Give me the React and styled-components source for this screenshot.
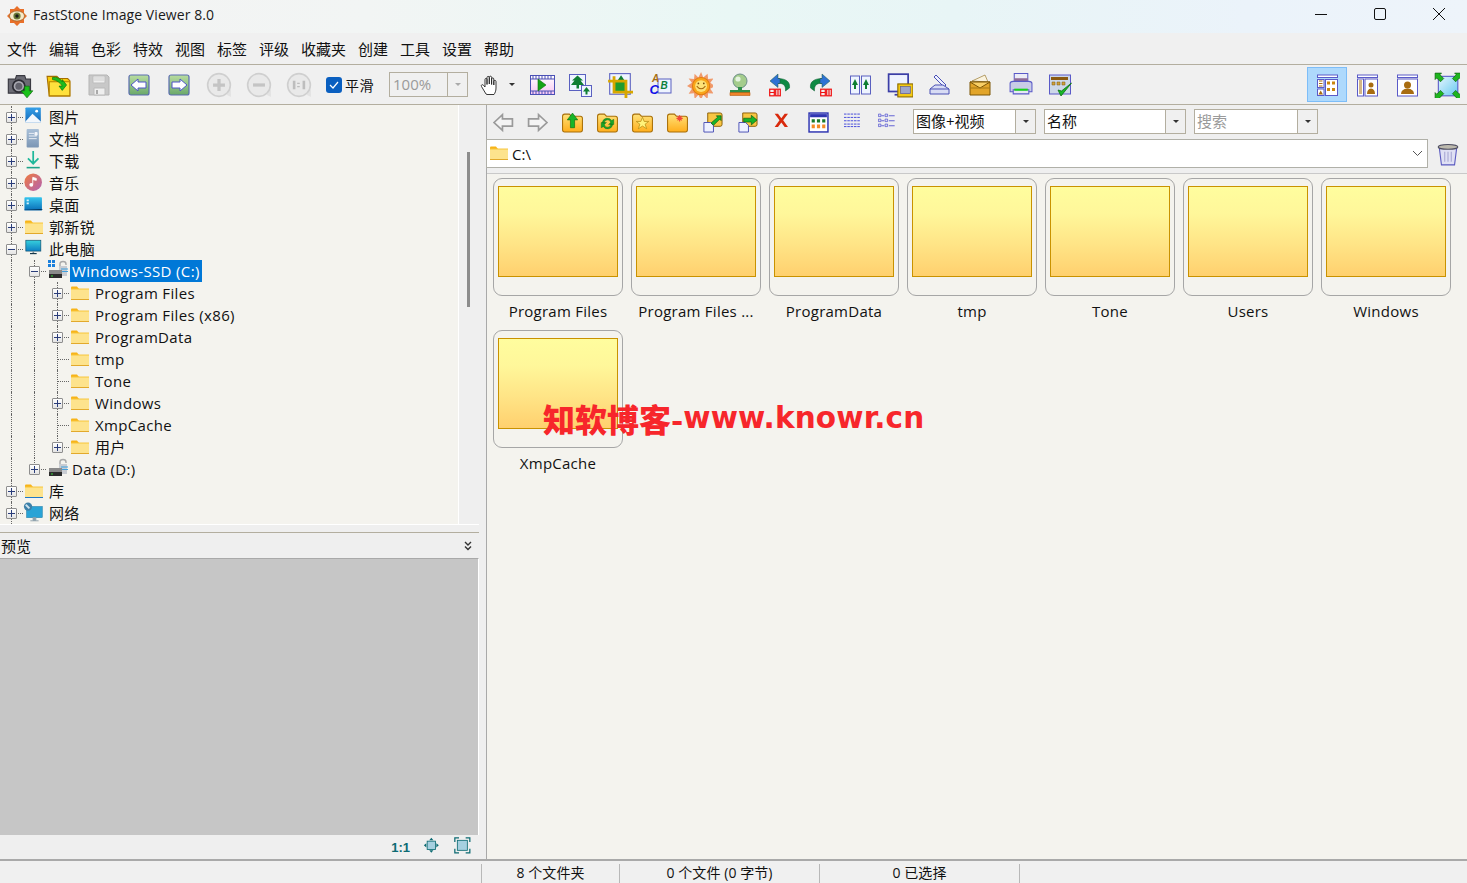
import React from "react";
import styled, { createGlobalStyle } from "styled-components";

const Global = createGlobalStyle`
  html, body { margin: 0; padding: 0; height: 100%; overflow: hidden; }
  body { background: #f0f0f0; font-family: "Open Sans", "Noto Sans CJK SC", sans-serif; color: #111; }
  #root { height: 100%; }
  * { box-sizing: border-box; }
`;

const Shell = styled.div`
  width: 1467px; height: 883px; display: flex; flex-direction: column; position: relative; overflow: hidden;
`;
const TitleBar = styled.div`
  height: 33px; flex: none; display: flex; align-items: center;
  background: linear-gradient(90deg, #f3f3f3 0%, #f2f5f4 25%, #e9f7f5 50%, #e8f5f6 65%, #ebf3fa 85%, #eef4fa 100%);
`;
const AppLogo = styled.svg`width: 20px; height: 20px; margin-left: 7px; flex: none; position: relative; top: -1px;`;
const TitleText = styled.span`font-size: 14px; letter-spacing: .08px; margin-left: 6px; color: #1a1a1a; position: relative; top: -2px;`;
const WindowButtons = styled.div`margin-left: auto; margin-right: -1px; display: flex; align-self: flex-start;`;
const WindowButton = styled.div`width: 59px; height: 28px; display: flex; align-items: center; justify-content: center;`;
const MenuBar = styled.div`
  height: 32px; flex: none; display: flex; align-items: center; padding-left: 7px; gap: 12px;
  background: #f0f0f0; border-bottom: 1px solid #b3ae9f;
`;
const MenuItem = styled.span`font-size: 15px; line-height: 32px; width: ${p => p.$w || 30}px; white-space: nowrap;`;
const MainToolbar = styled.div`
  height: 40px; flex: none; display: flex; align-items: center; background: #f0f0f0; border-bottom: 1px solid #b3ae9f;
`;
const ToolButton = styled.div`
  width: ${p => p.$w || 40}px; height: 35px; flex: none; display: flex; align-items: center; justify-content: center;
  ${p => p.$active ? "background: #aed9fc; border: 1px solid #7dbdf8;" : ""}
`;
const CheckBox = styled.div`
  width: 16px; height: 16px; margin-left: 7px; flex: none; background: #0a5fc0; border-radius: 3px;
  display: flex; align-items: center; justify-content: center;
`;
const CheckLabel = styled.span`font-size: 14px; letter-spacing: .4px; margin-left: 3px; width: 29px; white-space: nowrap;`;
const ZoomCombo = styled.div`
  width: 79px; height: 25px; margin-left: 15px; flex: none; display: flex; border: 1px solid #b3ae9f; background: #f0f0f0;
`;
const ZoomValue = styled.span`flex: 1; font-size: 15px; line-height: 23px; padding-left: 3px; color: #9a9a9a;`;
const ComboArrow = styled.div`
  width: ${p => p.$w || 20}px; flex: none; border-left: 1px solid #b3ae9f; display: flex; align-items: center; justify-content: center; background: #f0f0f0;
  &::after { content: ""; border: 3px solid transparent; border-top: 3px solid ${p => p.$dim ? "#aaa" : "#333"}; border-bottom: 0; width: 0; height: 0; }
`;
const HandGroup = styled.div`width: 52px; margin-left: 5px; height: 30px; display: flex; align-items: center; padding-left: 6px; gap: 6px; flex: none;`;
const SmallCaret = styled.div`border: 3px solid transparent; border-top: 3px solid #333; border-bottom: 0; width: 0; height: 0;`;
const RightGroup = styled.div`margin-left: auto; display: flex;`;
const Body = styled.div`flex: 1; display: flex; min-height: 0;`;
const LeftColumn = styled.div`width: 487px; flex: none; display: flex; flex-direction: column; background: #efefef; border-right: 1px solid #a9a9a9;`;
const TreeArea = styled.div`height: 420px; width: 479px; flex: none; display: flex; border-bottom: 1px solid #fff;`;
const TreePane = styled.div`width: 459px; flex: none; background: #f4f3ee; border-right: 1px solid #fff; padding-top: 1px; overflow: hidden;`;
const TreeScroll = styled.div`flex: 1; padding: 47px 0 0 8px;`;
const ScrollThumb = styled.div`width: 3px; height: 155px; background: #8c8c8c;`;
const Row = styled.div`display: flex; height: 22px; align-items: center; font-size: 15px; letter-spacing: .35px; white-space: nowrap;`;
const Guide = styled.div`
  width: 23px; height: 22px; flex: none; position: relative;
  ${p => p.$on ? `&::before { content: ""; position: absolute; left: 11px; top: 0; bottom: 0; border-left: 1px dotted #666; }` : ""}
`;
const Expander = styled.div`
  width: 23px; height: 22px; flex: none; position: relative;
  ${p => p.$up ? `&::before { content: ""; position: absolute; left: 11px; top: 0; height: ${p.$down ? 22 : 11}px; border-left: 1px dotted #666; }` : ""}
  &::after { content: ""; position: absolute; left: 11px; top: 11px; width: 12px; border-top: 1px dotted #666; }
`;
const ExpBox = styled.div`
  position: absolute; left: 6px; top: 6px; width: 11px; height: 11px; z-index: 1; background: linear-gradient(#fff, #e4e4e4); border: 1px solid #8e8e8e;
  border-radius: 1px;
  &::before { content: ""; position: absolute; left: 1px; right: 1px; top: 4px; height: 1px; background: #2a3d7a; }
  ${p => p.$plus ? `&::after { content: ""; position: absolute; top: 1px; bottom: 1px; left: 4px; width: 1px; background: #2a3d7a; }` : ""}
`;
const RowIcon = styled.div`width: 26px; height: 22px; flex: none; display: flex; align-items: center; padding-left: ${p => p.$pl ?? 1}px;`;
const RowLabel = styled.span`
  margin-left: -2px; padding: 0 2px; line-height: 22px; height: 22px;
  ${p => p.$sel ? "background: #0078d7; color: #fff;" : ""}
`;
const PreviewHeader = styled.div`
  width: 479px; margin-top: 7px; height: 26px; flex: none; border-top: 1px solid #b3ae9f; display: flex; align-items: center; justify-content: space-between;
  padding: 0 7px 0 1px; font-size: 15px;
`;
const PreviewImage = styled.div`width: 479px; height: 277px; flex: none; background: #c6c6c6; border-right: 1px solid #fff; border-top: 1px solid #a9a9a9;`;
const PreviewTools = styled.div`width: 479px; flex: 1; display: flex; justify-content: flex-end; align-items: center; padding-right: 5px; gap: 11px;`;
const RatioText = styled.span`font: bold 13px "Liberation Sans", sans-serif; color: #0d6b73; margin-right: 2px;`;
const RightColumn = styled.div`flex: 1; display: flex; flex-direction: column; min-width: 0; background: #efefef;`;
const SubToolbar = styled.div`height: 34px; flex: none; display: flex; align-items: center; padding-left: 0;`;
const SubButton = styled.div`width: ${p => p.$w || 35}px; height: 26px; flex: none; display: flex; align-items: center; justify-content: center;`;
const Combo = styled.div`
  width: ${p => p.$w}px; height: 25px; margin-left: ${p => p.$ml || 0}px; flex: none; display: flex; background: #fff; border: 1px solid #b3ae9f;
  position: relative; top: -1px;
`;
const ComboText = styled.span`flex: 1; font-size: 15px; line-height: 22px; padding-left: 2px; color: ${p => p.$dim ? "#9a9a9a" : "#111"}; white-space: nowrap;`;
const AddressRow = styled.div`height: 29px; flex: none; display: flex; align-items: center; margin-left: -1px;`;
const AddressBox = styled.div`
  width: 944px; height: 29px; background: #fff; border: 1px solid #b0b0a8; display: flex; align-items: center; padding: 0 4px 0 3px; font-size: 15px; gap: 4px;
`;
const AddressCaret = styled.svg`margin-left: auto; width: 11px; height: 7px;`;
const TrashSlot = styled.div`width: 39px; display: flex; justify-content: center;`;
const Gallery = styled.div`
  flex: 1; margin-top: 5px; background: #f4f3ee; border-top: 1px solid #c9c9c9; padding: 4px 0 0 6px;
  display: grid; grid-template-columns: repeat(7, 130px); column-gap: 8px; grid-auto-rows: 152px; align-content: start;
`;
const Thumb = styled.div`display: flex; flex-direction: column; align-items: center;`;
const ThumbCard = styled.div`
  width: 130px; height: 118px; flex: none; border: 1px solid #a6a6a6; border-radius: 9px; padding: 7px 4px 0;
`;
const FolderFace = styled.div`
  width: 120px; height: 91px; border: 1px solid #c99200; background: linear-gradient(#fffd9e 0%, #fff79a 30%, #ffe486 65%, #ffd06e 100%);
`;
const ThumbLabel = styled.div`font-size: 15px; letter-spacing: .25px; line-height: 20px; margin-top: 5px; white-space: nowrap;`;
const Watermark = styled.div`
  position: absolute; left: 543px; top: 400px; height: 36px; display: flex; align-items: center; color: #f7262b; font-weight: 900; white-space: nowrap;
`;
const WatermarkCn = styled.span`font: 900 32px/36px "Noto Sans CJK SC", sans-serif;`;
const WatermarkEn = styled.span`font: bold 29.5px/36px "DejaVu Sans", sans-serif; letter-spacing: .15px;`;
const StatusBar = styled.div`
  height: 24px; flex: none; display: flex; background: #f0f0f0; border-top: 2px solid #a9a9a9; font-size: 14px; letter-spacing: .08px; padding-left: 481px;
`;
const StatusCell = styled.div`
  width: ${p => p.$w}px; border-left: 1px solid #b8b8b8; text-align: center; margin-top: 3px; height: 19px; line-height: 17px; white-space: nowrap;
`;

const Svg = ({ s = 24, vb = 24, children, h }) => <svg width={s} height={h || s} viewBox={`0 0 ${vb} ${h ? vb * h / s : vb}`}>{children}</svg>;

const Folder = ({ s = 18, lib }) => (
  <svg width={s} height={s * 0.78} viewBox="0 0 18 14">
    <path d="M0 1.5Q0 .5 1 .5H6L8 3H0Z" fill="#f7b418" />
    <path d="M0 3H18V13.2H0Z" fill="#fde38d" />
    <path d="M0 2.5H18V3.5H0Z" fill="#f8c63c" />
    <path d="M0 13H18V14H0Z" fill={lib ? "#1e78c8" : "#e2a92c"} />
  </svg>
);

const Icons = {
  camera: <Svg s={28}><path d="M2 7H8L9 4H16L17 7H21V19H2Z" fill="#6b6b74" stroke="#3a3a42" /><circle cx="11" cy="13" r="5.2" fill="#a8a8b0" stroke="#2c2c34" strokeWidth="1.5" /><circle cx="11" cy="13" r="3" fill="#62626c" /><path d="M16 13H20V17H23L18 23L13 17H16Z" fill="#19c119" stroke="#0b700b" strokeWidth=".6" /></Svg>,
  open: <Svg s={26}><path d="M1 4H10L12 6H20L22 8V22H3Z" fill="#f9cb0d" stroke="#a66e00" /><path d="M3 9H22V22H3Z" fill="#ffe13d" stroke="#b48000" /><path d="M6 5Q12 4 15 9V7L19 12L15 17L12 13H15Q12 8 6 7Z" fill="#1dbb1d" stroke="#0a700a" strokeWidth=".6" /></Svg>,
  save: <Svg s={24}><path d="M2 2H20L22 4V22H2Z" fill="#c8c8c8" stroke="#b5b5b5" /><path d="M6 3H18V10H6Z" fill="#eeeeee" stroke="#bdbdbd" /><path d="M7 5H17M7 7H17" stroke="#cfcfcf" /><path d="M7 15H18V22H7Z" fill="#efefef" stroke="#bbb" /><path d="M9 17H11V21H9Z" fill="#aaa" /></Svg>,
  nav: (d) => <Svg s={24}><defs><linearGradient id={`g${d}`} x1="0" y1="0" x2="0" y2="1"><stop offset="0" stopColor="#b9dda0" /><stop offset="1" stopColor="#6aa86a" /></linearGradient></defs><rect x="2" y="2" width="20" height="20" rx="2" fill={`url(#g${d})`} stroke="#5a6cb0" strokeWidth="1.2" /><path d={d === "l" ? "M4 12L11 6V9H19V15H11V18Z" : "M20 12L13 6V9H5V15H13V18Z"} fill="#fff" stroke="#4f55c8" strokeWidth="1" /></Svg>,
  circ: (t) => <Svg s={26}><path d="M19 21L23 23V16Z" fill="#e3e3e3" /><circle cx="12" cy="12" r="10.5" fill="#e9e9e9" stroke="#cfcfcf" strokeWidth="1.5" />{t === "+" && <path d="M12 6.5V17.5M6.5 12H17.5" stroke="#c4c4c4" strokeWidth="3" />}{t === "-" && <path d="M6.5 12H17.5" stroke="#c4c4c4" strokeWidth="3" />}{t === "1" && <path d="M7.5 8V16M16.5 8V16M11.5 10V11M11.5 13V14" stroke="#bdbdbd" strokeWidth="2.4" />}</Svg>,
  hand: <Svg s={24}><path d="M7 21L2.5 13.5C1.7 12 3.4 11 4.5 12.3L6 14V6.5C6 5 8 5 8 6.5V11.5V4.5C8 3 10.3 3 10.3 4.5V11V4.3C10.3 2.8 12.6 2.8 12.6 4.3V11.5V6C12.6 4.6 14.8 4.6 14.8 6V12V8.5C14.8 7 17 7 17 8.5V15C17 18 16 20 15 21.5H8Z" fill="#fff" stroke="#222" strokeWidth=".9" /></Svg>,
  film: <svg width="25" height="22" viewBox="0 0 25 22"><defs><linearGradient id="fl" x1="0" y1="0" x2="0" y2="1"><stop offset="0" stopColor="#fff" /><stop offset="1" stopColor="#f9c6f2" /></linearGradient></defs><rect x=".5" y="1.5" width="24" height="19" fill="url(#fl)" stroke="#4a50b5" /><path d="M1 5H24M1 17H24" stroke="#4a50b5" /><path d="M3 2V5M6 2V5M9 2V5M12 2V5M15 2V5M18 2V5M21 2V5M3 17V20M6 17V20M9 17V20M12 17V20M15 17V20M18 17V20M21 17V20" stroke="#4a50b5" /><path d="M8 5V17L16 11Z" fill="#18a318" stroke="#0d6d0d" strokeWidth=".6" /></svg>,
  tree: <Svg s={24}><rect x="1.5" y="1.5" width="16" height="16" fill="#eef4ff" stroke="#5a60c0" /><path d="M9.5 2.5L15 7.5H12.5L16 12H11V15.5H8.5V12H3L6.5 7.5H4Z" fill="#0f7e33" /><rect x="13.5" y="12.5" width="10" height="11" fill="#eef4ff" stroke="#5a60c0" /><path d="M18.5 14L22 18.5H19.5V21.5H17.5V18.5H15Z" fill="#0f7e33" /></Svg>,
  crop: <Svg s={26}><rect x="2.5" y="1.5" width="19" height="19" fill="#eef4ff" stroke="#5a60c0" /><path d="M6 9H18V19H6Z" fill="#1f9c2f" /><path d="M13 3L17 9H9Z" fill="#0f7e33" /><path d="M6.5 4V18.5H24M1 8.5H17.5V24" fill="none" stroke="#d8a700" strokeWidth="2.6" /></Svg>,
  abc: <Svg s={24}><rect x="10" y="6" width="13" height="14" fill="#eef4ff" stroke="#5a60c0" /><text x="4" y="9" fontFamily="Liberation Sans" fontWeight="bold" fontStyle="italic" fontSize="10" fill="#a56d10">A</text><text x="12.5" y="16" fontFamily="Liberation Sans" fontWeight="bold" fontStyle="italic" fontSize="10" fill="#0b7f3b">B</text><text x="1.5" y="21" fontFamily="Liberation Sans" fontWeight="bold" fontStyle="italic" fontSize="13" fill="#1010e8">C</text></Svg>,
  sun: <Svg s={26}><path d="M13 0L15 5L19 1.5L19.5 6.5L24.5 6L21.5 10L26 13L21.5 15.5L24.5 20L19.5 19.5L19 25L15 21L13 26L10.5 21L7 25L6.5 19.5L1.5 20L4.5 15.5L0 13L4.5 10L1.5 6L6.5 6.5L7 1.5L10.5 5Z" fill="#f09a6c" /><circle cx="13" cy="13" r="8" fill="#f9a51a" stroke="#e27d10" /><circle cx="13" cy="13" r="5.5" fill="#fde276" /><path d="M9 13Q13 18 17 13" fill="none" stroke="#a8660c" /><circle cx="10.5" cy="10.5" r=".8" fill="#764b0c" /><circle cx="15.5" cy="10.5" r=".8" fill="#764b0c" /></Svg>,
  stamp: <Svg s={24}><circle cx="12" cy="8" r="7" fill="#a4cc8c" stroke="#6d8e88" /><circle cx="10" cy="6" r="2.6" fill="#e5f3df" /><path d="M10 14H14V17H22V20H2V17H10Z" fill="#2f8f4a" /><path d="M2 19.5H22V22.5H2Z" fill="#f0842a" stroke="#b55e12" strokeWidth=".6" /></Svg>,
  rot: (l) => <Svg s={24}><g transform={l ? "" : "translate(24 0) scale(-1 1)"}><path d="M10 5.5C18 5.5 22.5 9 21.5 15L17.5 18C18 12 15 10 10 10.5Z" fill="#0f8a44" stroke="#0c5d30" strokeWidth=".5" /><path d="M10 1L2 8L10 14.5V10.5H12V5.5H10Z" fill="#2f72d4" stroke="#1b5a44" strokeWidth=".5" /></g><g transform={l ? "translate(1 15.5)" : "translate(12 15.5)"} fill="none" stroke="#f01010" strokeWidth="1.2"><rect x=".7" y=".7" width="4.6" height="6.6" /><rect x="6.7" y=".7" width="4.6" height="6.6" /><path d="M.7 4H5.3M9 1V7" /></g></Svg>,
  split: <Svg s={24}><rect x="2.5" y="3" width="9" height="18" fill="#eef4ff" stroke="#5a60c0" /><rect x="13.5" y="3" width="9" height="18" fill="#eef4ff" stroke="#5a60c0" /><path d="M7 6L10 12H8V16H6V12H4ZM18 6L21 12H19V16H17V12H15Z" fill="#0f7e33" /></Svg>,
  monitor: <Svg s={26}><rect x="1.5" y="2" width="18" height="16" fill="#eef2ff" stroke="#3b3ea6" strokeWidth="1.6" /><path d="M7 21H16" stroke="#3b3ea6" strokeWidth="1.6" /><rect x="10" y="11" width="14" height="12" fill="#f4c913" stroke="#8a6a00" /><rect x="12.5" y="13.5" width="9" height="6.5" fill="#9da5cc" stroke="#55559a" strokeWidth=".6" /></Svg>,
  scanner: <Svg s={24}><path d="M8 2L18 12L16 14L6 4Z" fill="#eef1ff" stroke="#4a50b5" /><path d="M7 12H15L21 16V21H2V16Z" fill="#d8dcf4" stroke="#4a50b5" /><path d="M2 16H21" stroke="#4a50b5" /></Svg>,
  envelope: <Svg s={24}><path d="M4 8L17 2L20 9Z" fill="#faf3df" stroke="#9a7a30" strokeWidth=".7" /><path d="M2 9H22V22H2Z" fill="#e2a52a" stroke="#7d5606" /><path d="M2 9H22L12 15Z" fill="#f8cf66" stroke="#7d5606" /><path d="M2 15H22" stroke="#a87a14" /></Svg>,
  printer: <Svg s={25}><path d="M6 1.5H19V10H6Z" fill="#ececf6" stroke="#5a5ac8" /><path d="M6 6H19V11H6Z" fill="#8f6a96" /><path d="M2 11Q2 9 5 9H20Q23 9 23 11V19H2Z" fill="#c9cce6" stroke="#5a5ac8" /><path d="M5 17H20V21H5Z" fill="#e6e7f4" stroke="#5a5ac8" /><path d="M6 16H19V18H6Z" fill="#19d219" /></Svg>,
  check: <Svg s={24}><rect x="1.5" y="2" width="21" height="19" fill="#cdd8e8" stroke="#5a5ac8" /><path d="M3 4H20V7H3Z" fill="#8a5a10" /><path d="M4 9H7V12H4ZM9 9H12V12H9ZM14 9H17V12H14Z" fill="#cfa13a" stroke="#7a5a10" strokeWidth=".5" /><path d="M10 17L13 23L23.5 10L13.5 18Z" fill="#18b828" stroke="#0a700f" strokeWidth=".8" /></Svg>,
  layout: (k) => <Svg s={24}>
    <rect x="2.5" y="2" width="20" height="2.5" fill="#fff" stroke="#5a5ac8" />
    {k === 1 && <><rect x="2.5" y="6.5" width="6.5" height="8" fill="#fff" stroke="#5a5ac8" /><rect x="2.5" y="16" width="6.5" height="6.5" fill="#fff" stroke="#5a5ac8" /><rect x="10.5" y="6.5" width="12" height="16" fill="#fff" stroke="#5a5ac8" /><path d="M4 8H7.5M4 10.5H7.5M4 13H7.5" stroke="#a86c10" /><path d="M12 8.5H15V11.5H12ZM17 8.5H20V11.5H17ZM12 15H15V18H12ZM17 15H20V18H17Z" fill="#c9860e" /><path d="M5.7 17.5L8 21.5H3.5Z" fill="#a86c10" /></>}
    {k === 2 && <><rect x="2.5" y="6" width="6" height="17" fill="#fff" stroke="#5a5ac8" /><rect x="10" y="6" width="12.5" height="17" fill="#fff" stroke="#5a5ac8" /><path d="M4 8H7M4 10H7M4 12H7M4 14H7M4 16H7M4 18H7M4 20H7" stroke="#a86c10" /><circle cx="16" cy="12" r="2.5" fill="#a86c10" /><path d="M12 21Q12 16 16 15.5Q20 16 20 21Z" fill="#a86c10" /></>}
    {k === 3 && <><rect x="2.5" y="6" width="20" height="17" fill="#fff" stroke="#5a5ac8" /><circle cx="12.5" cy="12" r="3.5" fill="#a86c10" /><path d="M6 21Q6 16 12.5 15.5Q19 16 19 21Z" fill="#a86c10" /></>}
  </Svg>,
  full: <Svg s={26}><defs><linearGradient id="fu" x1="0" y1="0" x2="1" y2="1"><stop offset="0" stopColor="#e6f6ff" /><stop offset="1" stopColor="#66c9ef" /></linearGradient></defs><rect x="4" y="4" width="18" height="18" fill="url(#fu)" stroke="#5a5ac8" /><path d="M1 1H7L5.5 2.5L9 6L6 9L2.5 5.5L1 7ZM25 1H19L20.5 2.5L17 6L20 9L23.5 5.5L25 7ZM1 25H7L5.5 23.5L9 20L6 17L2.5 20.5L1 19ZM25 25H19L20.5 23.5L17 20L20 17L23.5 20.5L25 19Z" fill="#1eb51e" stroke="#0b5a10" strokeWidth=".6" /></Svg>,
  arrowOut: (r) => <Svg s={21} vb={20}><path d={r ? "M19 10L11 2.5V6.5H1.5V13.5H11V17.5Z" : "M1 10L9 2.5V6.5H18.5V13.5H9V17.5Z"} fill="#f4f4f4" stroke="#9a9a9a" strokeWidth="1.6" /></Svg>,
  yFolder: (inner, id) => <Svg s={23} vb={22}><defs><linearGradient id={id} x1="0" y1="0" x2="0" y2="1"><stop offset="0" stopColor="#ffe27a" /><stop offset="1" stopColor="#ffae1c" /></linearGradient></defs><path d="M1.5 5Q1.5 3 3.5 3H8L10 5H18.5Q20.5 5 20.5 7V18Q20.5 20 18.5 20H3.5Q1.5 20 1.5 18Z" fill={`url(#${id})`} stroke="#a86f08" />{inner}</Svg>,
  docMove: (arrow) => <Svg s={21} vb={22}><path d="M6 1H19Q21 1 21 3V13Q21 15 19 15H6Z" fill="#f9c643" stroke="#8a5e08" /><path d="M2 11H9L12 14V21H2Z" fill="#eef1ff" stroke="#4a50b5" />{arrow}</Svg>,
  xMark: <Svg s={20}><path d="M2 2H6L10 7.5L14 2H18L12.2 10L18 18H14L10 12.5L6 18H2L7.8 10Z" fill="#d92a0d" /></Svg>,
  thumbs: <Svg s={21} vb={20}><rect x="1" y="1" width="18" height="18" fill="#fff" stroke="#2f35b2" strokeWidth="1.4" /><path d="M2 2H18V5H2Z" fill="#2f35b2" /><path d="M3.5 7H6.5V10H3.5ZM8.5 7H11.5V10H8.5ZM13.5 7H16.5V10H13.5Z" fill="#1a7a2a" /><path d="M3.5 12H6.5V15.5H3.5ZM8.5 12H11.5V15.5H8.5ZM13.5 12H16.5V15.5H13.5Z" fill="#f58a24" /></Svg>,
  list: <Svg s={20}><path d="M0 2.5H20M0 6.5H20M0 10.5H20M0 14.5H20M0 17.5H20" stroke="#2a30d8" strokeDasharray="3 1" /></Svg>,
  detail: <Svg s={20}><path d="M.5 2.5H3.5V5.5H.5ZM8.5 2.5H11.5V5.5H8.5ZM.5 8.5H3.5V11.5H.5ZM8.5 8.5H11.5V11.5H8.5ZM.5 14.5H3.5V17.5H.5ZM8.5 14.5H11.5V17.5H8.5Z" fill="#dde" stroke="#4a4ad0" strokeWidth=".8" /><path d="M4 4.5H7.5M13 4.5H20M4 10.5H7.5M13 10.5H20M4 16.5H7.5M13 16.5H20" stroke="#4a4ad0" /></Svg>,
  trash: <Svg s={24} vb={22}><path d="M3 5H19L17 21H5Z" fill="#dfe0f4" stroke="#5a5ac0" /><ellipse cx="11" cy="4.5" rx="9" ry="2.2" fill="#bcb9ad" stroke="#4d4d60" /><path d="M8 9V18M11 9V18M14 9V18" stroke="#a8a8d4" /></Svg>,
  picture: <Svg s={20}><defs><linearGradient id="pc" x1="0" y1="0" x2="0" y2="1"><stop offset="0" stopColor="#36a0e8" /><stop offset="1" stopColor="#1268b8" /></linearGradient></defs><rect x=".5" y=".5" width="18.5" height="18.5" rx="1" fill="url(#pc)" /><circle cx="14" cy="5" r="1.7" fill="#fff" /><path d="M.5 17.5L9 8L19 17.5V19H.5Z" fill="#f2f7fc" /></Svg>,
  doc: <Svg s={21}><defs><linearGradient id="dc" x1="0" y1="0" x2="0" y2="1"><stop offset="0" stopColor="#a9c0d8" /><stop offset="1" stopColor="#7b96b4" /></linearGradient></defs><rect x="3" y="0" width="14" height="21" rx="1" fill="url(#dc)" /><path d="M5.5 5H11.5M5.5 8H14.5M5.5 11H14.5M12.5 4V7H15V4Z" stroke="#f3f6fa" strokeWidth="1" fill="#f3f6fa" /></Svg>,
  down: <Svg s={21}><path d="M10.5 0V14M4.5 8.5L10.5 14.5L16.5 8.5" fill="none" stroke="#20b89a" strokeWidth="2" /><path d="M3 19H18" stroke="#1fa48a" strokeWidth="1.8" /></Svg>,
  music: <Svg s={21}><defs><linearGradient id="mu" x1="0" y1="0" x2="1" y2="1"><stop offset="0" stopColor="#ef7b3e" /><stop offset="1" stopColor="#b262b4" /></linearGradient></defs><circle cx="10.5" cy="10.5" r="10" fill="url(#mu)" /><path d="M10 5V13M10 5L14 6.2V8.4L10 7.4" fill="#fff" stroke="#fff" /><circle cx="8.3" cy="13.5" r="2.2" fill="#fff" /></Svg>,
  desktop: <Svg s={21}><defs><linearGradient id="dk" x1="0" y1="0" x2="0" y2="1"><stop offset="0" stopColor="#36c6ee" /><stop offset="1" stopColor="#0a6fb8" /></linearGradient></defs><rect x=".5" y="2.5" width="20" height="15" rx="1" fill="url(#dk)" /><path d="M3 5H5.5V7H3ZM3 8.5H5.5V10.5H3Z" fill="#d8f2fb" /><path d="M.5 17H20.5V16" stroke="#075a99" /></Svg>,
  pc: <Svg s={20}><defs><linearGradient id="pcg" x1="0" y1="0" x2="0" y2="1"><stop offset="0" stopColor="#37d1dd" /><stop offset="1" stopColor="#0d7fc4" /></linearGradient></defs><rect x="1" y="1.5" width="18" height="13" fill="url(#pcg)" stroke="#0d4d6a" strokeWidth=".8" /><path d="M9 15H11V17H9Z" fill="#7a8c96" /><path d="M6 17.5H14" stroke="#15364a" strokeWidth="1.4" /></Svg>,
  drive: (win) => <svg width="24" height="22" viewBox="0 0 24 22">{win && <path d="M1 0H4V3H1ZM5 0H8V3H5ZM1 4H4V7H1ZM5 4H8V7H5Z" fill="#1b80dc" />}<path d="M13 6V4Q13 1.5 16 1.5Q19 1.5 19 4V5" fill="none" stroke="#a8a8a8" strokeWidth="1.4" /><path d="M12 6H20V16H12Z" fill="#c8ccd2" /><path d="M14 9H21M14 11.5H21" stroke="#3f9fdd" strokeWidth="1.1" /><path d="M2 10H15V17H2Z" fill="#8a8a8a" /><path d="M2 14H15V18H2Z" fill="#2c2c2c" /><path d="M4 15.4H6V16.6H4Z" fill="#37d437" /></svg>,
  net: <Svg s={22}><rect x="4" y="5" width="17" height="12" fill="#29a3d6" stroke="#147aa8" strokeWidth=".6" /><path d="M11 17H14V20H11ZM8 20.5H17" fill="#8ba0ac" stroke="#8ba0ac" /><circle cx="5.5" cy="5" r="4.5" fill="#3d80a8" /><path d="M3 3L7 7" stroke="#cfe3ef" strokeWidth="2" /></Svg>,
  fit: <Svg s={20}><rect x="5" y="5" width="10" height="10" fill="#a6d0e0" stroke="#0d6b73" /><path d="M10 1L7.5 4H12.5ZM10 19L7.5 16H12.5ZM1 10L4 7.5V12.5ZM19 10L16 7.5V12.5Z" fill="#0d6b73" /></Svg>,
  fill: <Svg s={20}><rect x="4" y="4" width="12" height="12" fill="#a6d0e0" stroke="#0d6b73" /><path d="M1 6V1H6M14 1H19V6M1 14V19H6M14 19H19V14" fill="none" stroke="#0d6b73" strokeWidth="1.5" /></Svg>,
};

const menu = [["文件"], ["编辑"], ["色彩"], ["特效"], ["视图"], ["标签"], ["评级"], ["收藏夹", 45], ["创建"], ["工具"], ["设置"], ["帮助"]];

const treeRows = [
  { g: [], up: true, down: true, exp: "plus", icon: Icons.picture, pl: 2, label: "图片" },
  { g: [], up: true, down: true, exp: "plus", icon: Icons.doc, pl: 1, label: "文档" },
  { g: [], up: true, down: true, exp: "plus", icon: Icons.down, pl: 1, label: "下载" },
  { g: [], up: true, down: true, exp: "plus", icon: Icons.music, pl: 1, label: "音乐" },
  { g: [], up: true, down: true, exp: "plus", icon: Icons.desktop, pl: 1, label: "桌面" },
  { g: [], up: true, down: true, exp: "plus", icon: <Folder />, pl: 2, label: "郭新锐" },
  { g: [], up: true, down: true, exp: "minus", icon: Icons.pc, pl: 2, label: "此电脑" },
  { g: [1], up: true, down: true, exp: "minus", icon: Icons.drive(true), pl: 1, label: "Windows-SSD (C:)", sel: true },
  { g: [1, 1], up: true, down: true, exp: "plus", icon: <Folder />, pl: 2, label: "Program Files" },
  { g: [1, 1], up: true, down: true, exp: "plus", icon: <Folder />, pl: 2, label: "Program Files (x86)" },
  { g: [1, 1], up: true, down: true, exp: "plus", icon: <Folder />, pl: 2, label: "ProgramData" },
  { g: [1, 1], up: true, down: true, icon: <Folder />, pl: 2, label: "tmp" },
  { g: [1, 1], up: true, down: true, icon: <Folder />, pl: 2, label: "Tone" },
  { g: [1, 1], up: true, down: true, exp: "plus", icon: <Folder />, pl: 2, label: "Windows" },
  { g: [1, 1], up: true, down: true, icon: <Folder />, pl: 2, label: "XmpCache" },
  { g: [1, 1], up: true, exp: "plus", icon: <Folder />, pl: 2, label: "用户" },
  { g: [1], up: true, exp: "plus", icon: Icons.drive(false), pl: 1, label: "Data (D:)" },
  { g: [], up: true, down: true, exp: "plus", icon: <Folder lib />, pl: 2, label: "库" },
  { g: [], up: true, down: true, exp: "plus", icon: Icons.net, pl: 0, label: "网络" },
];

const thumbs = ["Program Files", "Program Files ...", "ProgramData", "tmp", "Tone", "Users", "Windows", "XmpCache"];

export default function App() {
  return (
    <Shell>
      <Global />
      <TitleBar>
        <AppLogo viewBox="0 0 20 20">
          <path d="M10 0L13 3L17 3L17 7L20 10L17 13L17 17L13 17L10 20L7 17L3 17L3 13L0 10L3 7L3 3L7 3Z" fill="#e8702a" />
          <ellipse cx="10" cy="10" rx="7.5" ry="5" fill="#f6e9c9" stroke="#8a5a20" strokeWidth=".6" />
          <circle cx="10" cy="10" r="3.6" fill="#6a7a38" />
          <circle cx="10" cy="10" r="1.7" fill="#1a1a1a" />
        </AppLogo>
        <TitleText>FastStone Image Viewer 8.0</TitleText>
        <WindowButtons>
          <WindowButton><svg width="12" height="12" viewBox="0 0 12 12"><path d="M0 6.5H12" stroke="#111" /></svg></WindowButton>
          <WindowButton><svg width="12" height="12" viewBox="0 0 12 12"><rect x=".5" y=".5" width="11" height="11" rx="1.5" fill="none" stroke="#111" /></svg></WindowButton>
          <WindowButton><svg width="12" height="12" viewBox="0 0 12 12"><path d="M0 0L12 12M12 0L0 12" stroke="#111" /></svg></WindowButton>
        </WindowButtons>
      </TitleBar>
      <MenuBar>
        {menu.map(([t, w]) => <MenuItem key={t} $w={w}>{t}</MenuItem>)}
      </MenuBar>
      <MainToolbar>
        <ToolButton $w={39}>{Icons.camera}</ToolButton>
        <ToolButton>{Icons.open}</ToolButton>
        <ToolButton>{Icons.save}</ToolButton>
        <ToolButton>{Icons.nav("l")}</ToolButton>
        <ToolButton>{Icons.nav("r")}</ToolButton>
        <ToolButton>{Icons.circ("+")}</ToolButton>
        <ToolButton>{Icons.circ("-")}</ToolButton>
        <ToolButton>{Icons.circ("1")}</ToolButton>
        <CheckBox><svg width="10" height="8" viewBox="0 0 10 8"><path d="M1 4L4 7L9 1" fill="none" stroke="#fff" strokeWidth="1.2" /></svg></CheckBox>
        <CheckLabel>平滑</CheckLabel>
        <ZoomCombo><ZoomValue>100%</ZoomValue><ComboArrow $dim /></ZoomCombo>
        <HandGroup>{Icons.hand}<SmallCaret /></HandGroup>
        <ToolButton $w={35}>{Icons.film}</ToolButton>
        <ToolButton>{Icons.tree}</ToolButton>
        <ToolButton>{Icons.crop}</ToolButton>
        <ToolButton>{Icons.abc}</ToolButton>
        <ToolButton>{Icons.sun}</ToolButton>
        <ToolButton>{Icons.stamp}</ToolButton>
        <ToolButton>{Icons.rot(true)}</ToolButton>
        <ToolButton>{Icons.rot(false)}</ToolButton>
        <ToolButton>{Icons.split}</ToolButton>
        <ToolButton>{Icons.monitor}</ToolButton>
        <ToolButton>{Icons.scanner}</ToolButton>
        <ToolButton>{Icons.envelope}</ToolButton>
        <ToolButton>{Icons.printer}</ToolButton>
        <ToolButton>{Icons.check}</ToolButton>
        <RightGroup>
          <ToolButton $active>{Icons.layout(1)}</ToolButton>
          <ToolButton>{Icons.layout(2)}</ToolButton>
          <ToolButton>{Icons.layout(3)}</ToolButton>
          <ToolButton>{Icons.full}</ToolButton>
        </RightGroup>
      </MainToolbar>
      <Body>
        <LeftColumn>
          <TreeArea>
            <TreePane>
              {treeRows.map(r => (
                <Row key={r.label}>
                  {r.g.map((on, i) => <Guide key={i} $on={on} />)}
                  <Expander $up={r.up} $down={r.down}>{r.exp && <ExpBox $plus={r.exp === "plus"} />}</Expander>
                  <RowIcon $pl={r.pl}>{r.icon}</RowIcon>
                  <RowLabel $sel={r.sel}>{r.label}</RowLabel>
                </Row>
              ))}
            </TreePane>
            <TreeScroll><ScrollThumb /></TreeScroll>
          </TreeArea>
          <PreviewHeader>
            预览
            <svg width="8" height="10" viewBox="0 0 8 10"><path d="M1 1L4 4L7 1M1 5.5L4 8.5L7 5.5" fill="none" stroke="#333" strokeWidth="1.4" /></svg>
          </PreviewHeader>
          <PreviewImage />
          <PreviewTools>
            <RatioText>1:1</RatioText>
            {Icons.fit}
            {Icons.fill}
          </PreviewTools>
        </LeftColumn>
        <RightColumn>
          <SubToolbar>
            <SubButton $w={33}>{Icons.arrowOut(false)}</SubButton>
            <SubButton>{Icons.arrowOut(true)}</SubButton>
            <SubButton>{Icons.yFolder(<path d="M11 2L16 8.5H13V16H9V8.5H6Z" fill="#18b528" stroke="#0b6b14" strokeWidth=".6" />, "y1")}</SubButton>
            <SubButton>{Icons.yFolder(<path d="M6 11A5 5 0 0 1 15 9L17 8V13H12L14 11A3 3 0 0 0 8 12ZM16 13A5 5 0 0 1 7 15L5 16V11H10L8 13A3 3 0 0 0 14 12Z" fill="#18a528" stroke="#0b6b14" strokeWidth=".4" />, "y2")}</SubButton>
            <SubButton>{Icons.yFolder(<path d="M11 6L12.6 10H17L13.5 12.6L15 17L11 14.4L7 17L8.5 12.6L5 10H9.4Z" fill="#fff27a" stroke="#b68a10" strokeWidth=".7" />, "y3")}</SubButton>
            <SubButton>{Icons.yFolder(<path d="M13 4V10M10 7H16M11 5L15 9M15 5L11 9" stroke="#f0463a" strokeWidth="1.1" />, "y4")}</SubButton>
            <SubButton>{Icons.docMove(<path d="M15 4H20V9L18.5 7.5L12 14L9.5 11.5L16.5 5.5Z" fill="#18b528" stroke="#0b5b14" strokeWidth=".7" />)}</SubButton>
            <SubButton>{Icons.docMove(<path d="M7 6.5H15V3.5L21 8.5L15 13.5V10.5H7Z" fill="#18b528" stroke="#0b5b14" strokeWidth=".7" />)}</SubButton>
            <SubButton>{Icons.xMark}</SubButton>
            <SubButton $w={37}>{Icons.thumbs}</SubButton>
            <SubButton $w={33}>{Icons.list}</SubButton>
            <SubButton>{Icons.detail}</SubButton>
            <Combo $w={123} $ml={8}><ComboText>图像+视频</ComboText><ComboArrow /></Combo>
            <Combo $w={142} $ml={8}><ComboText>名称</ComboText><ComboArrow /></Combo>
            <Combo $w={124} $ml={8}><ComboText $dim>搜索</ComboText><ComboArrow /></Combo>
          </SubToolbar>
          <AddressRow>
            <AddressBox>
              <Folder />
              C:\
              <AddressCaret viewBox="0 0 11 7"><path d="M1 1L5.5 5.5L10 1" fill="none" stroke="#555" /></AddressCaret>
            </AddressBox>
            <TrashSlot>{Icons.trash}</TrashSlot>
          </AddressRow>
          <Gallery>
            {thumbs.map(t => (
              <Thumb key={t}>
                <ThumbCard><FolderFace /></ThumbCard>
                <ThumbLabel>{t}</ThumbLabel>
              </Thumb>
            ))}
          </Gallery>
        </RightColumn>
      </Body>
      <StatusBar>
        <StatusCell $w={138}>8 个文件夹</StatusCell>
        <StatusCell $w={200}>0 个文件 (0 字节)</StatusCell>
        <StatusCell $w={200}>0 已选择</StatusCell>
        <StatusCell $w={1} />
      </StatusBar>
      <Watermark>
        <WatermarkCn>知软博客-</WatermarkCn>
        <WatermarkEn>www.knowr.cn</WatermarkEn>
      </Watermark>
    </Shell>
  );
}
